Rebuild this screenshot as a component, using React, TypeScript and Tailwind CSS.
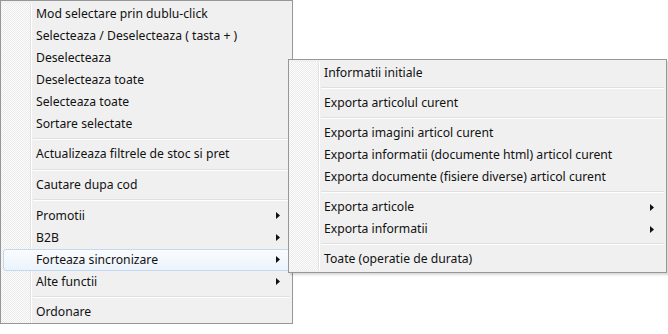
import React from "react";

type Entry =
  | { kind: "item"; label: string; sub?: boolean; active?: boolean }
  | { kind: "sep" };

const mainMenu: Entry[] = [
  { kind: "item", label: "Mod selectare prin dublu-click" },
  { kind: "item", label: "Selecteaza / Deselecteaza ( tasta + )" },
  { kind: "item", label: "Deselecteaza" },
  { kind: "item", label: "Deselecteaza toate" },
  { kind: "item", label: "Selecteaza toate" },
  { kind: "item", label: "Sortare selectate" },
  { kind: "sep" },
  { kind: "item", label: "Actualizeaza filtrele de stoc si pret" },
  { kind: "sep" },
  { kind: "item", label: "Cautare dupa cod" },
  { kind: "sep" },
  { kind: "item", label: "Promotii", sub: true },
  { kind: "item", label: "B2B", sub: true },
  { kind: "item", label: "Forteaza sincronizare", sub: true, active: true },
  { kind: "item", label: "Alte functii", sub: true },
  { kind: "sep" },
  { kind: "item", label: "Ordonare" },
];

const subMenu: Entry[] = [
  { kind: "item", label: "Informatii initiale" },
  { kind: "sep" },
  { kind: "item", label: "Exporta articolul curent" },
  { kind: "sep" },
  { kind: "item", label: "Exporta imagini articol curent" },
  { kind: "item", label: "Exporta informatii (documente html) articol curent" },
  { kind: "item", label: "Exporta documente (fisiere diverse) articol curent" },
  { kind: "sep" },
  { kind: "item", label: "Exporta articole", sub: true },
  { kind: "item", label: "Exporta informatii", sub: true },
  { kind: "sep" },
  { kind: "item", label: "Toate (operatie de durata)" },
];

const Arrow = () => (
  <svg width="4" height="7" viewBox="0 0 4 7" className="shrink-0">
    <path d="M0 0 L4 3.5 L0 7 Z" fill="#111" />
  </svg>
);

const MenuList: React.FC<{ entries: Entry[]; sepH: string }> = ({ entries, sepH }) => (
  <div className="relative flex flex-col">
    {/* dotted gutter for icons */}
    <div className="absolute left-0 top-0 bottom-0 w-[29px] bg-[conic-gradient(#fdfdfd_25%,#ebebeb_0_50%,#fdfdfd_0_75%,#ebebeb_0)] bg-size-[2px_2px]" />
    <div className="absolute left-[29px] top-0 bottom-0 w-px bg-[#e2e3e3]" />
    <div className="absolute left-[30px] top-0 bottom-0 w-px bg-white" />
    {entries.map((e, i) =>
      e.kind === "sep" ? (
        <div key={i} className={`relative flex flex-col justify-center pl-[32px] pr-[2px] ${sepH}`}>
          <div className="h-px bg-[#e0e0e0]" />
          <div className="h-px bg-white" />
        </div>
      ) : (
        <div key={i} className="relative h-[22px] flex items-center pl-[35px] pr-[12px]">
          {e.active && (
            <div className="absolute left-[2px] right-[2px] top-0 bottom-0 rounded-[3px] border border-[#c3d9f2] bg-[linear-gradient(#fafcfe,#ebf3fb)]" />
          )}
          <span className="relative flex-1 whitespace-nowrap">{e.label}</span>
          {e.sub && (
            <span className="relative">
              <Arrow />
            </span>
          )}
        </div>
      )
    )}
  </div>
);

export default function App() {
  return (
    <div className="relative w-[668px] h-[334px] overflow-hidden bg-white font-['Noto_Sans',sans-serif] text-[12.2px] text-[#111]">
      <div className="w-[293px] border border-[#979797] bg-[#f0f0f0] pt-[2px]">
        <MenuList entries={mainMenu} sepH="h-[8.6px]" />
      </div>
      <div className="absolute left-[288px] top-[59px] w-[379px] border border-[#979797] bg-[#f0f0f0] py-[2px] shadow-[2px_2px_2px_rgba(0,0,0,0.15)]">
        <MenuList entries={subMenu} sepH="h-[8px]" />
      </div>
    </div>
  );
}
